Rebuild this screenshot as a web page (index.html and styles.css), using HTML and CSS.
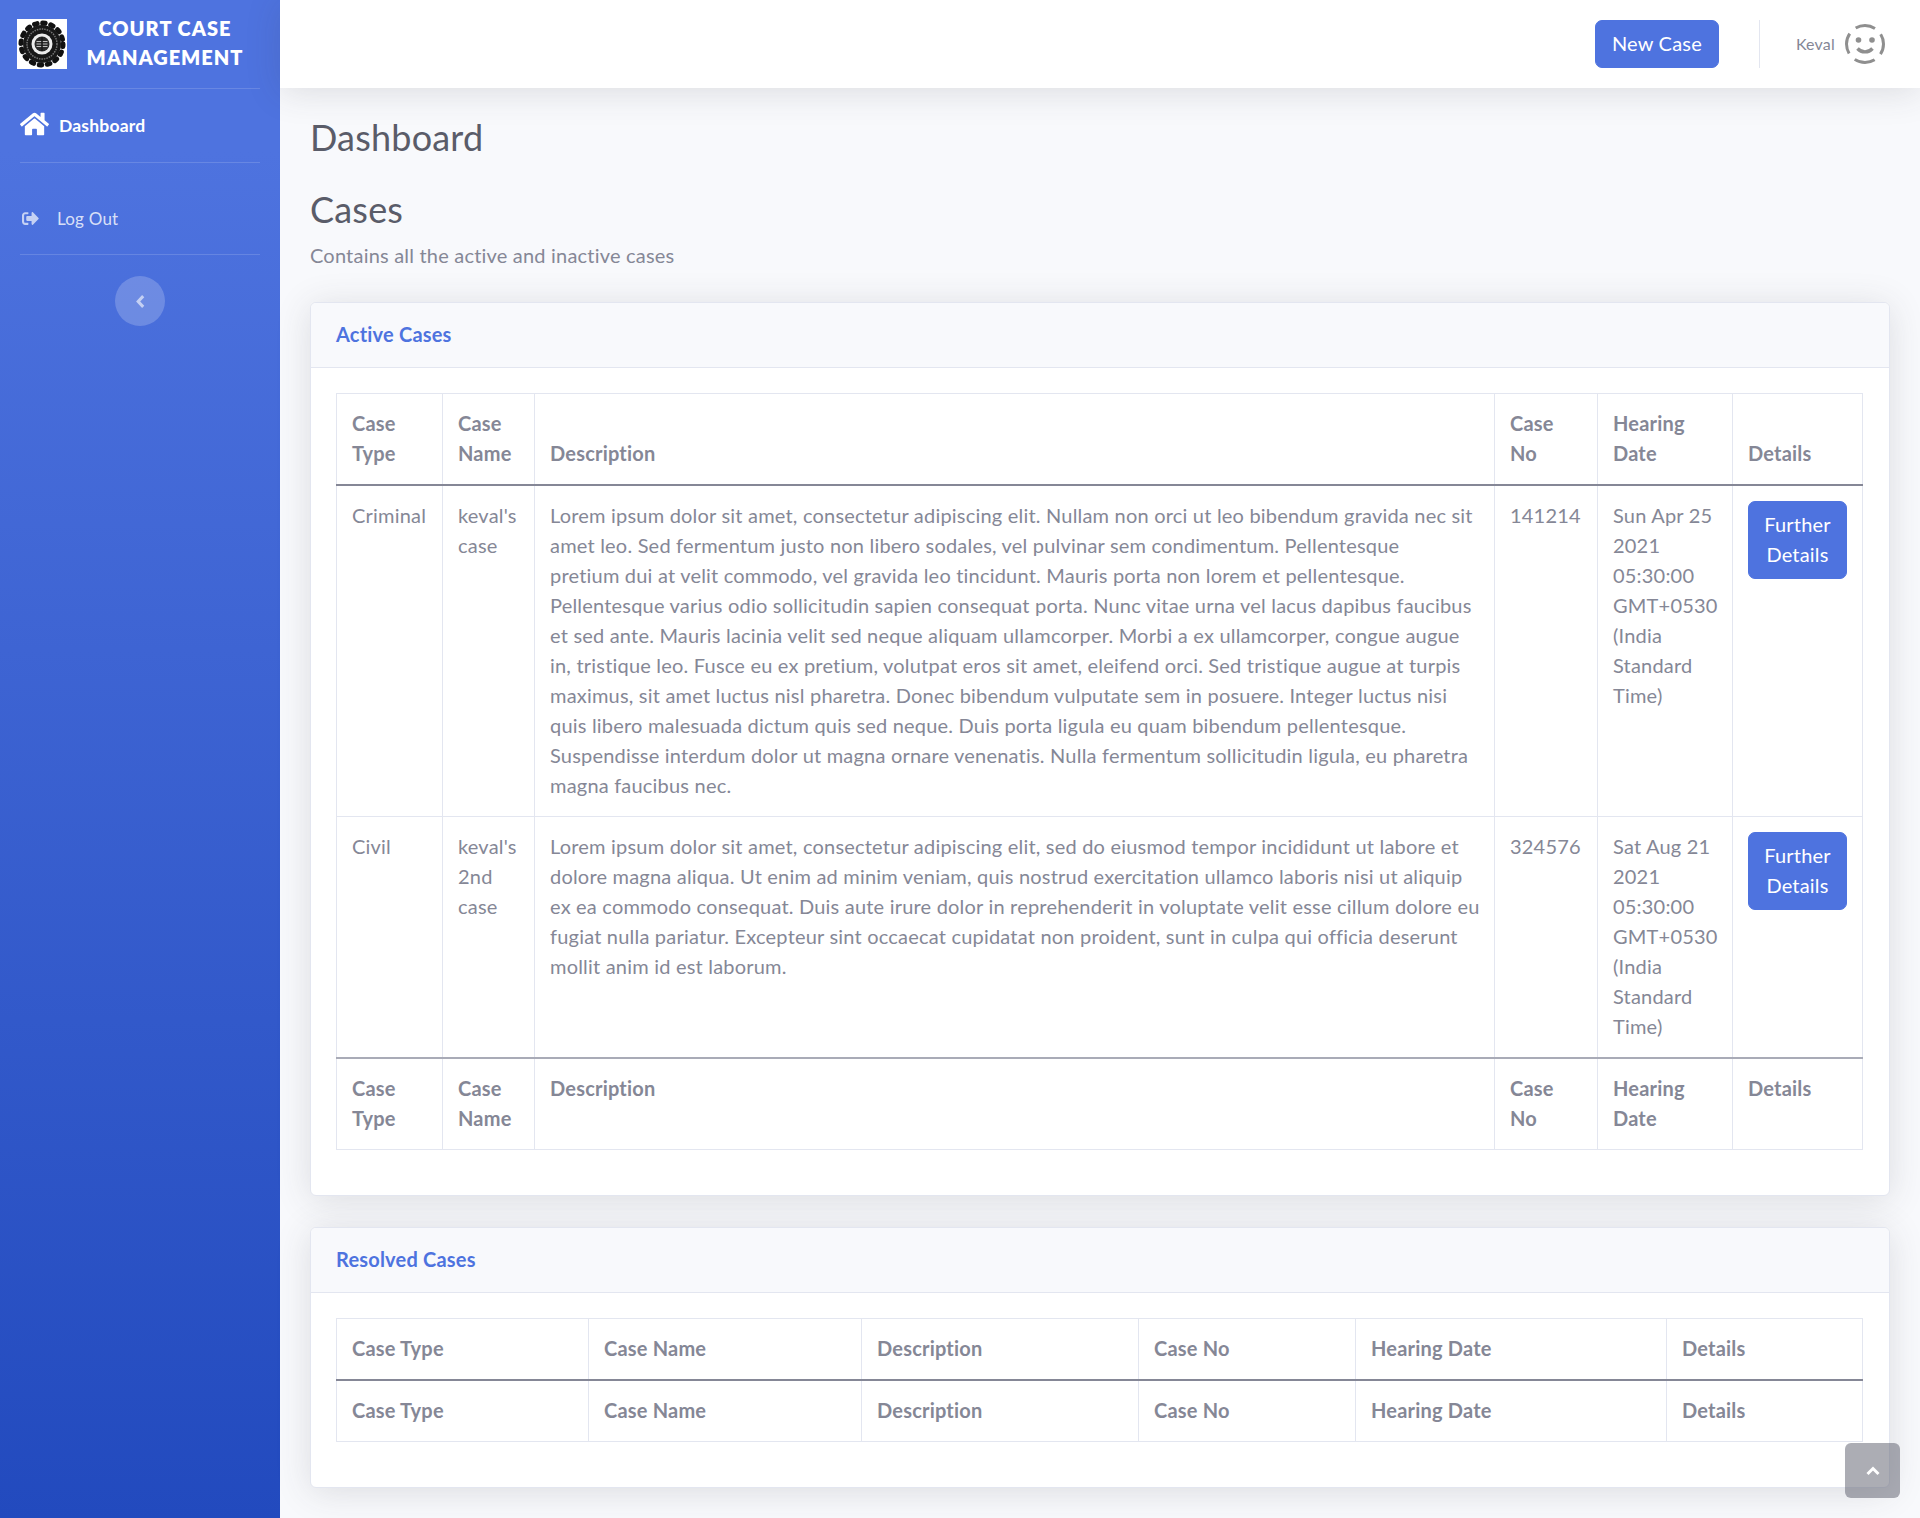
FILE: index.html
```html
<!DOCTYPE html>
<html lang="en">
<head>
<meta charset="utf-8">
<title>Court Case Management</title>
<link rel="stylesheet" href="styles.css">
</head>
<body>
<div class="wrapper">
  <aside class="sidebar">
    <div class="brand">
      <svg class="logo" viewBox="0 0 50 50" aria-hidden="true">
        <rect width="50" height="50" fill="#fff"/>
        <circle cx="25" cy="25" r="21" fill="none" stroke="#111" stroke-width="5" stroke-dasharray="2.600 5.650" stroke-linecap="round"/>
        <circle cx="25" cy="25" r="19" fill="#181818"/>
        <circle cx="25" cy="25" r="15" fill="none" stroke="#777" stroke-width="1.400" stroke-dasharray="1.500 1"/>
        <circle cx="25" cy="25" r="10.500" fill="#ededed"/>
        <circle cx="25" cy="25" r="7.500" fill="#2a2a2a"/>
        <path d="M19.500 22.500h11M19.500 25h11M19.500 27.500h11" stroke="#cfcfcf" stroke-width=".9"/>
        <path d="M25 18v14" stroke="#1a1a1a" stroke-width="1.600"/>
      </svg>
      <div class="brand-text">COURT CASE MANAGEMENT</div>
    </div>
    <hr class="side-rule">
    <a class="nav-link active" href="#">
      <svg class="home" viewBox="0 0 576 512" aria-hidden="true"><path fill="currentColor" d="M280.4 148.3L96 300.1V464a16 16 0 0 0 16 16l112.100-.3a16 16 0 0 0 15.900-16V368a16 16 0 0 1 16-16h64a16 16 0 0 1 16 16v95.600a16 16 0 0 0 16 16.100L464 480a16 16 0 0 0 16-16V300L295.700 148.300a12.200 12.200 0 0 0-15.300 0zM571.600 251.500L488 182.600V44.100a12 12 0 0 0-12-12h-56a12 12 0 0 0-12 12v72.600L318.500 43a48 48 0 0 0-61 0L4.300 251.500a12 12 0 0 0-1.600 16.900l25.500 31A12 12 0 0 0 45.200 301l235.200-193.700a12.200 12.200 0 0 1 15.300 0L530.900 301a12 12 0 0 0 16.900-1.600l25.500-31a12 12 0 0 0-1.700-16.900z"/></svg>
      <span>Dashboard</span>
    </a>
    <hr class="side-rule">
    <a class="nav-link logout" href="#">
      <svg class="out" viewBox="0 64 512 384" aria-hidden="true"><path fill="currentColor" d="M497 273L329 441c-15 15-41 4.500-41-17v-96H152c-13.300 0-24-10.700-24-24v-96c0-13.300 10.700-24 24-24h136V88c0-21.400 25.900-32 41-17l168 168c9.300 9.400 9.300 24.600 0 34zM192 436v-40c0-6.600-5.400-12-12-12H96c-17.700 0-32-14.300-32-32V160c0-17.700 14.300-32 32-32h84c6.600 0 12-5.400 12-12V76c0-6.600-5.400-12-12-12H96c-53 0-96 43-96 96v192c0 53 43 96 96 96h84c6.600 0 12-5.400 12-12z"/></svg>
      <span>Log Out</span>
    </a>
    <hr class="side-rule">
    <button class="toggle" type="button" aria-label="Collapse sidebar">
      <svg viewBox="0 0 10 14" aria-hidden="true"><path d="M7.500 2L2.800 7l4.700 5" fill="none" stroke="currentColor" stroke-width="2.800"/></svg>
    </button>
  </aside>
  <div class="main">
    <header class="topbar">
      <button class="btn" type="button">New Case</button>
      <div class="divider"></div>
      <span class="user">Keval</span>
      <svg class="avatar" viewBox="0 0 40 40" aria-hidden="true">
        <circle cx="20" cy="20" r="18.500" fill="none" stroke="#8f8f8f" stroke-width="3" stroke-dasharray="21 8.060" stroke-dashoffset="10.500" transform="rotate(-90 20 20)"/>
        <circle cx="13.500" cy="16" r="2.800" fill="#8f8f8f"/>
        <circle cx="27" cy="16" r="2.800" fill="#8f8f8f"/>
        <path d="M12.500 24.500c4 4.500 11 4.500 15 0" fill="none" stroke="#8f8f8f" stroke-width="3.400"/>
      </svg>
    </header>
    <main class="content">
      <h1 class="page-title">Dashboard</h1>
      <h2 class="section-title">Cases</h2>
      <p class="section-sub">Contains all the active and inactive cases</p>

      <section class="card">
        <div class="card-head">Active Cases</div>
        <div class="card-body">
          <table class="table active-table">
            <colgroup>
              <col class="c1"><col class="c2"><col class="c3"><col class="c4"><col class="c5"><col class="c6">
            </colgroup>
            <thead>
              <tr><th>Case Type</th><th>Case Name</th><th>Description</th><th>Case No</th><th>Hearing Date</th><th>Details</th></tr>
            </thead>
            <tbody>
              <tr>
                <td>Criminal</td>
                <td>keval's case</td>
                <td class="desc">Lorem ipsum dolor sit amet, consectetur adipiscing elit. Nullam non orci ut leo bibendum gravida nec sit<br>amet leo. Sed fermentum justo non libero sodales, vel pulvinar sem condimentum. Pellentesque<br>pretium dui at velit commodo, vel gravida leo tincidunt. Mauris porta non lorem et pellentesque.<br>Pellentesque varius odio sollicitudin sapien consequat porta. Nunc vitae urna vel lacus dapibus faucibus<br>et sed ante. Mauris lacinia velit sed neque aliquam ullamcorper. Morbi a ex ullamcorper, congue augue<br>in, tristique leo. Fusce eu ex pretium, volutpat eros sit amet, eleifend orci. Sed tristique augue at turpis<br>maximus, sit amet luctus nisl pharetra. Donec bibendum vulputate sem in posuere. Integer luctus nisi<br>quis libero malesuada dictum quis sed neque. Duis porta ligula eu quam bibendum pellentesque.<br>Suspendisse interdum dolor ut magna ornare venenatis. Nulla fermentum sollicitudin ligula, eu pharetra<br>magna faucibus nec.</td>
                <td>141214</td>
                <td>Sun Apr 25 2021 05:30:00 GMT+0530 (India Standard Time)</td>
                <td><button class="btn btn-cell" type="button">Further Details</button></td>
              </tr>
              <tr>
                <td>Civil</td>
                <td>keval's 2nd case</td>
                <td class="desc">Lorem ipsum dolor sit amet, consectetur adipiscing elit, sed do eiusmod tempor incididunt ut labore et<br>dolore magna aliqua. Ut enim ad minim veniam, quis nostrud exercitation ullamco laboris nisi ut aliquip<br>ex ea commodo consequat. Duis aute irure dolor in reprehenderit in voluptate velit esse cillum dolore eu<br>fugiat nulla pariatur. Excepteur sint occaecat cupidatat non proident, sunt in culpa qui officia deserunt<br>mollit anim id est laborum.</td>
                <td>324576</td>
                <td>Sat Aug 21 2021 05:30:00 GMT+0530 (India Standard Time)</td>
                <td><button class="btn btn-cell" type="button">Further Details</button></td>
              </tr>
            </tbody>
            <tfoot>
              <tr><th>Case Type</th><th>Case Name</th><th>Description</th><th>Case No</th><th>Hearing Date</th><th>Details</th></tr>
            </tfoot>
          </table>
        </div>
      </section>

      <section class="card">
        <div class="card-head">Resolved Cases</div>
        <div class="card-body">
          <table class="table resolved-table">
            <colgroup>
              <col class="r1"><col class="r2"><col class="r3"><col class="r4"><col class="r5"><col class="r6">
            </colgroup>
            <thead>
              <tr><th>Case Type</th><th>Case Name</th><th>Description</th><th>Case No</th><th>Hearing Date</th><th>Details</th></tr>
            </thead>
            <tfoot>
              <tr><th>Case Type</th><th>Case Name</th><th>Description</th><th>Case No</th><th>Hearing Date</th><th>Details</th></tr>
            </tfoot>
          </table>
        </div>
      </section>
    </main>
  </div>
</div>
<a class="to-top" href="#" aria-label="Back to top">
  <svg viewBox="0 0 14 10" aria-hidden="true"><path d="M1.500 8L7 2.500 12.500 8" fill="none" stroke="currentColor" stroke-width="3"/></svg>
</a>
</body>
</html>
```
FILE: styles.css
```css
* { box-sizing: border-box; }
html, body { margin: 0; padding: 0; }
body {
  font-family: "Lato", "Noto Sans", sans-serif;
  font-size: 20px;
  line-height: 30px;
  letter-spacing: .2px;
  color: #858796;
  background: #f8f9fc;
}
.wrapper { display: flex; min-height: 1518px; }
.sidebar {
  width: 280px;
  flex: none;
  padding: 19px 20px 0;
  background: linear-gradient(180deg, #4e73df 10%, #224abe 100%);
  color: #fff;
  display: flex;
  flex-direction: column;
  align-items: stretch;
}
.brand { display: flex; align-items: center; height: 50px; margin-left: -3px; }
.logo { width: 50px; height: 50px; flex: none; }
.brand-text {
  width: 168px;
  margin-left: 14px;
  padding-bottom: 2px;
  text-align: center;
  font-size: 20px;
  line-height: 29px;
  font-weight: 800;
  letter-spacing: 1px;
}
.side-rule { width: 100%; margin: 0; border: 0; border-top: 1px solid rgba(255,255,255,.15); }
.brand + .side-rule { margin-top: 19px; }
.nav-link { display: flex; align-items: center; color: #fff; text-decoration: none; }
.nav-link.active { height: 73px; font-size: 17.500px; font-weight: 700; }
.home { width: 29px; height: 26px; margin-right: 10px; margin-top: -4px; }
.nav-link.logout {
  height: 91px;
  padding-top: 20px;
  font-size: 17px;
  color: rgba(255,255,255,.8);
}
.out { width: 17px; height: 13px; margin: 0 18px 0 2px; opacity: .85; }
.toggle {
  width: 50px;
  height: 50px;
  margin: 21px auto 0;
  padding: 0;
  border: 0;
  border-radius: 50%;
  background: rgba(255,255,255,.2);
  color: rgba(255,255,255,.6);
  display: flex;
  align-items: center;
  justify-content: center;
}
.toggle svg { width: 11px; height: 15px; }
.main { flex: 1; min-width: 0; display: flex; flex-direction: column; }
.topbar {
  height: 88px;
  background: #fff;
  display: flex;
  align-items: center;
  justify-content: flex-end;
  padding-right: 35px;
  box-shadow: 0 4px 35px rgba(58,59,69,.15);
  position: relative;
}
.btn {
  font: inherit;
  letter-spacing: inherit;
  color: #fff;
  background: #4e73df;
  border: 1px solid #4e73df;
  border-radius: 7px;
}
.topbar .btn { width: 124px; height: 48px; padding: 0 0 3px; }
.divider { width: 1px; height: 48px; background: #e3e6f0; margin: 0 36px 0 40px; }
.user { font-size: 16px; margin-right: 10px; padding-bottom: 1px; }
.avatar { width: 40px; height: 40px; }
.content { padding: 0 30px; }
.page-title { margin: 24px 0 0; font-size: 36px; line-height: 50px; font-weight: 400; color: #5a5c69; }
.section-title { margin: 22px 0 0; font-size: 36px; line-height: 50px; font-weight: 400; color: #5a5c69; }
.section-sub { margin: 6px 0 0; line-height: 30px; font-size: 20px; }
.card {
  margin-top: 31px;
  background: #fff;
  border: 1px solid #e3e6f0;
  border-radius: 6px;
  box-shadow: 0 4px 35px rgba(58,59,69,.15);
  overflow: hidden;
}
.section-sub + .card { margin-top: 32px; }
.card-head {
  height: 65px;
  padding: 0 26px 2px 25px;
  display: flex;
  align-items: center;
  font-weight: 700;
  color: #4e73df;
  background: #f8f9fc;
  border-bottom: 1px solid #e3e6f0;
}
.card-body { padding: 25px 27px 45px 25px; }
.table { width: 100%; border-collapse: collapse; table-layout: fixed; color: #858796; }
.table th, .table td { padding: 14px 15px 16px; border: 1px solid #e3e6f0; vertical-align: top; text-align: left; }
.table thead th { vertical-align: bottom; border-bottom: 2px solid #858796; font-weight: 700; }
.table tfoot th { font-weight: 700; border-top: 2px solid #a9abb7; }
.table tbody tr:last-child td { border-bottom: 0; }
.table .desc { white-space: nowrap; }
.c1 { width: 106px; } .c2 { width: 92px; } .c3 { width: 960px; } .c4 { width: 103px; } .c5 { width: 135px; } .c6 { width: 130px; }
.r1 { width: 252px; } .r2 { width: 273px; } .r3 { width: 277px; } .r4 { width: 217px; } .r5 { width: 311px; } .r6 { width: 196px; }
.table .btn-cell { display: block; width: 99px; margin-top: 1px; padding: 7px 12px 9px; line-height: 30px; }
.to-top {
  position: fixed;
  right: 20px;
  bottom: 20px;
  width: 55px;
  height: 55px;
  border-radius: 6px;
  background: rgba(90,92,105,.5);
  color: #fff;
  display: flex;
  align-items: center;
  justify-content: center;
}
.to-top svg { width: 14px; height: 10px; margin-top: 1px; }
```
